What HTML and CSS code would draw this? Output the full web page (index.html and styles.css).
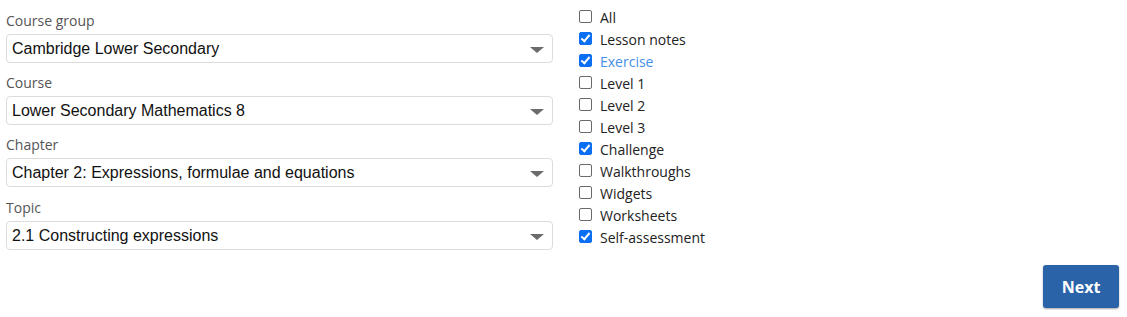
FILE: index.html
```html
<!DOCTYPE html>
<html>
<head>
<meta charset="utf-8">
<link rel="stylesheet" href="styles.css">
</head>
<body>
<div class="page">
  <div class="main">
    <div class="fields">
      <div class="field">
        <label class="field-label">Course group</label>
        <div class="select"><span>Cambridge Lower Secondary</span><i class="caret"></i></div>
      </div>
      <div class="field">
        <label class="field-label">Course</label>
        <div class="select"><span>Lower Secondary Mathematics 8</span><i class="caret"></i></div>
      </div>
      <div class="field">
        <label class="field-label">Chapter</label>
        <div class="select"><span>Chapter 2: Expressions, formulae and equations</span><i class="caret"></i></div>
      </div>
      <div class="field field-last">
        <label class="field-label">Topic</label>
        <div class="select"><span>2.1 Constructing expressions</span><i class="caret"></i></div>
      </div>
    </div>
    <div class="checks">
      <label class="check"><input type="checkbox"><span>All</span></label>
      <label class="check"><input type="checkbox" checked><span>Lesson notes</span></label>
      <label class="check"><input type="checkbox" checked><span class="hover">Exercise</span></label>
      <label class="check"><input type="checkbox"><span>Level 1</span></label>
      <label class="check"><input type="checkbox"><span>Level 2</span></label>
      <label class="check"><input type="checkbox"><span>Level 3</span></label>
      <label class="check"><input type="checkbox" checked><span>Challenge</span></label>
      <label class="check"><input type="checkbox"><span>Walkthroughs</span></label>
      <label class="check"><input type="checkbox"><span>Widgets</span></label>
      <label class="check"><input type="checkbox"><span>Worksheets</span></label>
      <label class="check"><input type="checkbox" checked><span>Self-assessment</span></label>
    </div>
  </div>
  <div class="actions">
    <button class="btn-next">Next</button>
  </div>
</div>
</body>
</html>
```
FILE: styles.css
```css
html, body {
  margin: 0;
  padding: 0;
  background: #fff;
}
.page {
  width: 1127px;
  height: 317px;
  box-sizing: border-box;
  padding: 3px 8px 0 6px;
}
.main {
  display: flex;
  align-items: flex-start;
}
.fields {
  width: 547px;
  padding-top: 8px;
  display: flex;
  flex-direction: column;
  gap: 10px;
}
.field {
  display: flex;
  flex-direction: column;
}
.field-last {
  margin-top: 1px;
}
.field-label {
  font-family: "Open Sans", sans-serif;
  font-size: 14px;
  line-height: 20px;
  color: #555;
  margin-bottom: 3px;
}
.select {
  height: 29px;
  box-sizing: border-box;
  border: 1px solid #dcdcdc;
  border-radius: 4px;
  display: flex;
  align-items: center;
  justify-content: space-between;
  padding: 0 5px 0 5px;
  font-family: "Liberation Sans", Arial, sans-serif;
  font-size: 16px;
  color: #111;
}
.caret {
  width: 0;
  height: 0;
  border-left: 7px solid transparent;
  border-right: 7px solid transparent;
  border-top: 6px solid #6b6b6b;
  margin-right: 3px;
  margin-top: 2px;
}
.checks {
  margin-left: 26px;
  padding-top: 2px;
  display: flex;
  flex-direction: column;
}
.check {
  height: 22px;
  display: flex;
  align-items: center;
  gap: 8px;
  font-family: "Open Sans", sans-serif;
  font-size: 14px;
  color: #222;
}
.check input {
  appearance: none;
  -webkit-appearance: none;
  position: relative;
  margin: 0;
  width: 13px;
  height: 13px;
  box-sizing: border-box;
  border: 1px solid #6a6a6a;
  border-radius: 2px;
  background: #fff;
}
.check input:checked {
  background: #0a6ff2;
  border-color: #0a6ff2;
}
.check input:checked::after {
  content: "";
  position: absolute;
  left: 3px;
  top: 0px;
  width: 3px;
  height: 7px;
  border: solid #fff;
  border-width: 0 2px 2px 0;
  transform: rotate(40deg);
}
.check span {
  line-height: 22px;
  padding-top: 3px;
}
.check .hover {
  color: #4590e6;
}
.actions {
  display: flex;
  justify-content: flex-end;
  margin-top: 15px;
}
.btn-next {
  width: 76px;
  height: 43px;
  border: none;
  border-radius: 3px;
  background: #2a63a8;
  color: #fff;
  font-family: "Open Sans", sans-serif;
  font-weight: 700;
  font-size: 16px;
  box-shadow: 0 1px 2px rgba(0,0,0,0.35);
  cursor: pointer;
}
```
